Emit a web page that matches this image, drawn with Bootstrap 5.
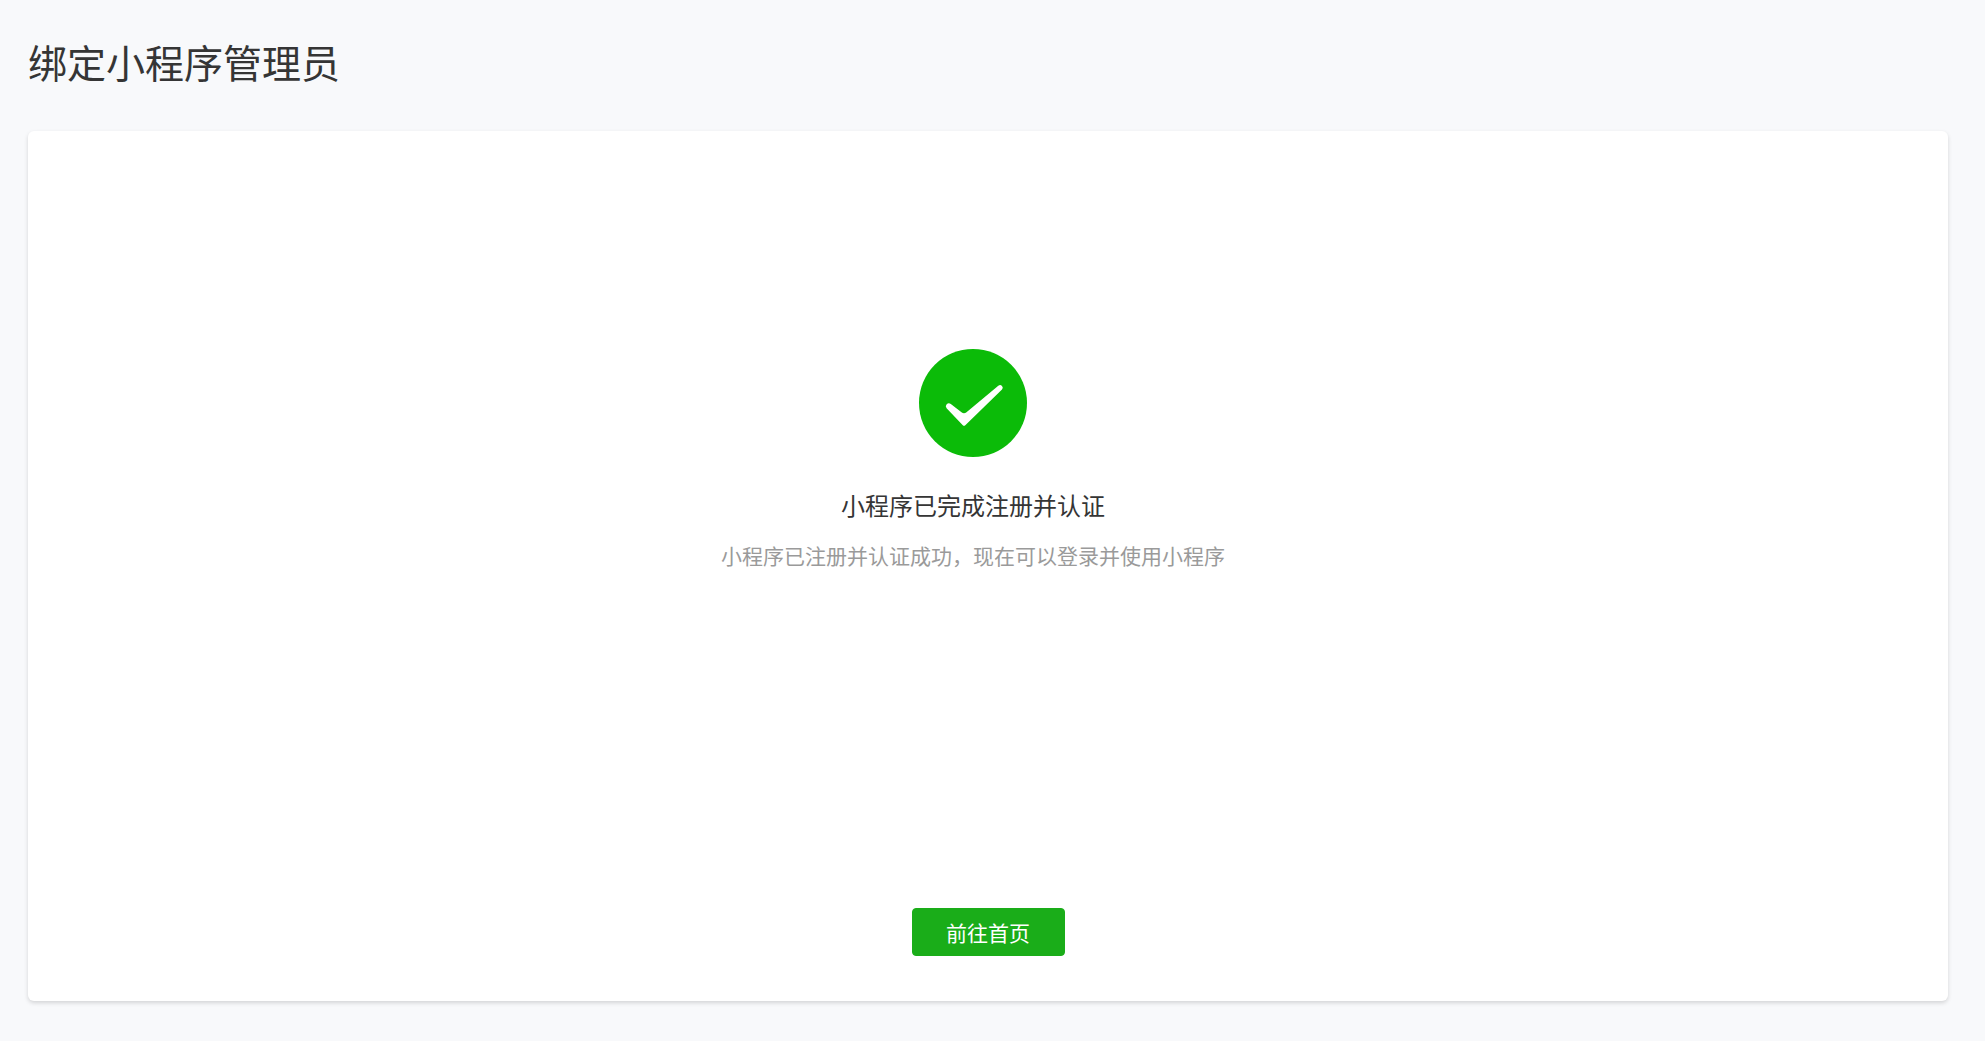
<!DOCTYPE html>
<html lang="zh-CN">
<head>
<meta charset="utf-8">
<meta name="viewport" content="width=device-width, initial-scale=1">
<title>绑定小程序管理员</title>
<link href="https://cdn.jsdelivr.net/npm/bootstrap@5.3.0/dist/css/bootstrap.min.css" rel="stylesheet">
<style>
body { background: #f8f9fb; color: #353535; font-family: "Noto Sans CJK SC", sans-serif; }
.page { padding: 28px 37px 40px 28px; gap: 37px; }
.page-title { font-size: 39px; line-height: 66px; font-weight: 400; }
.panel { border-radius: 6px; box-shadow: 0 2px 4px rgba(0, 0, 0, .15); padding: 218px 0 45px; }
.result { padding-right: 30px; }
.result-icon { width: 108px; height: 108px; }
.result-title { font-size: 24px; line-height: 36px; font-weight: 400; margin-top: 30px; }
.result-text { font-size: 21px; line-height: 32px; color: #9a9a9a; margin-top: 16px; }
.btn-home { --bs-btn-bg: #1aad19; --bs-btn-border-color: #1aad19; --bs-btn-color: #fff; --bs-btn-hover-bg: #179b16; --bs-btn-hover-color: #fff; --bs-btn-font-size: 21px; --bs-btn-line-height: 32px; --bs-btn-padding-x: 33px; --bs-btn-padding-y: 7px; --bs-btn-border-radius: 4px; min-width: 153px; }
</style>
<script defer src="https://cdn.jsdelivr.net/npm/bootstrap@5.3.0/dist/js/bootstrap.bundle.min.js"></script>
</head>
<body>
<main class="page d-flex flex-column min-vh-100">
  <h1 class="page-title mb-0">绑定小程序管理员</h1>
  <section class="panel bg-white flex-grow-1 d-flex flex-column align-items-center justify-content-between">
    <div class="result text-center align-self-stretch">
      <svg class="result-icon d-block mx-auto" viewBox="0 0 108 108" aria-hidden="true">
        <circle cx="54" cy="54" r="54" fill="#0bbb08"/>
        <path d="M27.600 59.200Q26 57.300 27.500 55.500Q29.500 53.300 31.800 55L42.500 63.200Q45 65.200 47.500 63.200L79.300 36.800Q81.300 35.200 83 37Q84.600 38.800 83 40.500L46.300 76.200Q45 77.400 43.800 76.200Z" fill="#fff"/>
      </svg>
      <h2 class="result-title mb-0">小程序已完成注册并认证</h2>
      <p class="result-text mb-0">小程序已注册并认证成功，现在可以登录并使用小程序</p>
    </div>
    <button type="button" class="btn btn-home">前往首页</button>
  </section>
</main>
</body>
</html>
